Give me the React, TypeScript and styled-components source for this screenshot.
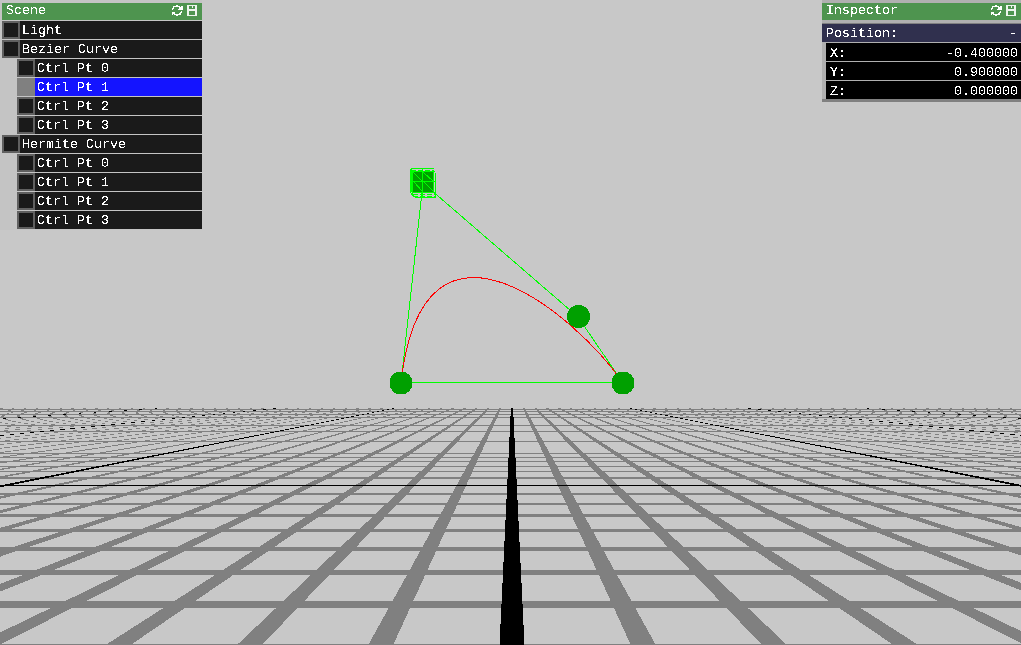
import React from "react";
import styled, { createGlobalStyle } from "styled-components";

const Global = createGlobalStyle`
  html, body { margin: 0; padding: 0; width: 1021px; height: 645px; overflow: hidden; background: #c8c8c8; }
`;

const Viewport = styled.div`
  position: relative;
  width: 1021px;
  height: 645px;
  overflow: hidden;
  background: #c8c8c8;
  font-family: "Liberation Mono", monospace;
  font-size: 13.33px;
  line-height: 17px;
  color: #fff;
`;
const SceneSvg = styled.svg`
  position: absolute;
  inset: 0;
`;
const Panel = styled.section<{ $side: "left" | "right" }>`
  position: absolute;
  top: 0;
  box-sizing: border-box;
  padding-top: 3px;
  ${(p) =>
    p.$side === "left"
      ? "left: 0; width: 202px; padding-left: 2px; background: #c4c4c4;"
      : "right: 0; width: 199px; background: #b0b0b0; border-bottom: 3px solid #808080;"}
`;
const TitleBar = styled.header`
  display: flex;
  align-items: center;
  box-sizing: border-box;
  height: 17px;
  padding: 0 5px 2px 4px;
  margin-bottom: 1px;
  background: #4e944f;
`;
const Label = styled.span`
  flex: 1;
  white-space: pre;
  filter: url(#pixelate);
`;
const TitleIcons = styled.span`
  display: flex;
  align-items: center;
  gap: 4px;
`;
const Row = styled.div<{ $level?: number; $selected?: boolean }>`
  display: flex;
  align-items: center;
  height: 18px;
  margin: 0 0 1px ${(p) => (p.$level ? 15 : 0)}px;
  background: ${(p) => (p.$selected ? "#1414ff" : "#1a1a1a")};
`;
const Check = styled.span<{ $on?: boolean }>`
  box-sizing: border-box;
  flex: none;
  width: 18px;
  height: 18px;
  margin-right: 2px;
  border: 2px solid ${(p) => (p.$on ? "#808080" : "#606060")};
  background: ${(p) => (p.$on ? "#808080" : "#1a1a1a")};
`;
const GroupHeader = styled.div`
  display: flex;
  align-items: center;
  box-sizing: border-box;
  height: 19px;
  margin: 3px 0 1px;
  padding: 0 4px;
  border-top: 1px solid #808080;
  background: #30304e;
`;
const Field = styled.div`
  display: flex;
  align-items: center;
  box-sizing: border-box;
  height: 18px;
  margin: 0 0 1px 4px;
  padding: 2px 3px 0 4px;
  background: #000;
  &:last-child {
    margin-bottom: 0;
  }
`;
const Value = styled.span`
  white-space: pre;
  filter: url(#pixelate);
`;

const HZ = 385, CX = 512, F = 1294, H = 1.98, W = 0.095;
const project = (X: number, Z: number) => {
  const d = F / Z;
  return `${(CX + (X * d) / H).toFixed(2)},${(HZ + d).toFixed(2)}`;
};
const Z0 = 12.9, ZFAR = 56.5, ZNEAR = 3;
const range = (a: number, b: number) => Array.from({ length: b - a + 1 }, (_, i) => a + i);
const columnPts = (X: number) =>
  [project(X - W, ZFAR), project(X + W, ZFAR), project(X + W, ZNEAR), project(X - W, ZNEAR)].join(" ");
const rowPts = (k: number) => {
  const z = Z0 + k;
  const yA = HZ + F / (z + W);
  const yB = HZ + F / Math.max(z - W, 0.1);
  return `0,${yA.toFixed(2)} 1021,${yA.toFixed(2)} 1021,${yB.toFixed(2)} 0,${yB.toFixed(2)}`;
};

const Floor = () => (
  <g shapeRendering="crispEdges">
    {range(-8, 43).map((k) => (
      <polygon key={`r${k}`} points={rowPts(k)} fill="#808080" />
    ))}
    {range(-50, 50).filter((x) => !(x % 10 === 0 && Math.abs(x) <= 30)).map((x) => (
      <polygon key={`c${x}`} points={columnPts(x)} fill="#808080" />
    ))}
    <polygon points={rowPts(0)} fill="#000" />
    {[-30, -20, -10, 0, 10, 20, 30].map((x) => (
      <polygon key={`a${x}`} points={columnPts(x)} fill="#000" />
    ))}
  </g>
);

const Curve = () => (
  <g shapeRendering="crispEdges">
    <path d="M401 383 L423 183 L578 317 L623 383" fill="none" stroke="#00ff00" strokeWidth="1" />
    <rect x="401" y="382" width="222" height="1.2" fill="#00ff00" />
    <path d="M401 383 C423 183 578 317 623 383" fill="none" stroke="#ff0000" strokeWidth="1" />
    <circle cx="401" cy="383" r="11.5" fill="#00a000" />
    <circle cx="623" cy="383" r="11.5" fill="#00a000" />
    <circle cx="578.5" cy="316.5" r="11.5" fill="#00a000" />
  </g>
);

const Gizmo = () => (
  <g shapeRendering="crispEdges">
    <rect x="413" y="172" width="21" height="20" fill="#00a000" />
    <g fill="none" stroke="#00ff00" strokeWidth="1">
      <path d="M410.5 168.5 H433.5 M410.5 171.5 H434.5 M410.5 168.5 V192.5 M412.5 170.5 V194.5" />
      <path d="M433.5 169.5 V192.5 M435.5 172.5 V197.5 M414.5 197.5 H435.5 M412.5 192.5 H434.5" />
      <path d="M410.5 192.5 L414.5 197.5" />
      <path d="M422.5 168.5 V197.5 M412.5 181.5 H434.5 M413.5 172.5 L422.5 181.5 M423.5 172.5 L433.5 181.5 M423.5 181.5 L433.5 191.5 M413.5 181.5 L422.5 191.5" />
    </g>
    <path d="M411 170 H433 M413 194.5 H435 M413 196 H435" stroke="#00ff00" strokeDasharray="5 2" />
    <path d="M411.5 169 V192" stroke="#00ff00" />
  </g>
);

const Refresh = () => (
  <svg width="12" height="11" viewBox="0 0 12 11" fill="none" stroke="#fff" strokeWidth="1.4" shapeRendering="crispEdges">
    <path d="M1.5 5 C2 2 4 1 6 1 C7.5 1 8.5 1.5 9.5 3" />
    <path d="M10.5 6 C10 9 8 10 6 10 C4.5 10 3.5 9.5 2.5 8" />
    <path d="M7 4.5 H11.5 V0.5 Z M0.5 6.5 H5 L0.5 10.5 Z" fill="#fff" stroke="none" />
  </svg>
);
const Save = () => (
  <svg width="10" height="11" viewBox="0 0 10 11" shapeRendering="crispEdges">
    <rect x="0" y="0" width="10" height="11" fill="#eef4ee" />
    <rect x="2" y="1" width="6" height="3" fill="#4e944f" />
    <rect x="5" y="1" width="1" height="2" fill="#eef4ee" />
    <rect x="2" y="6" width="6" height="4" fill="#4e944f" />
  </svg>
);

const Title = ({ text }: { text: string }) => (
  <TitleBar>
    <Label>{text}</Label>
    <TitleIcons><Refresh /><Save /></TitleIcons>
  </TitleBar>
);

const tree = [
  { name: "Light", level: 0 },
  { name: "Bezier Curve", level: 0 },
  { name: "Ctrl Pt 0", level: 1 },
  { name: "Ctrl Pt 1", level: 1, selected: true },
  { name: "Ctrl Pt 2", level: 1 },
  { name: "Ctrl Pt 3", level: 1 },
  { name: "Hermite Curve", level: 0 },
  { name: "Ctrl Pt 0", level: 1 },
  { name: "Ctrl Pt 1", level: 1 },
  { name: "Ctrl Pt 2", level: 1 },
  { name: "Ctrl Pt 3", level: 1 },
];
const fields = [["X:", "-0.400000"], ["Y:", "0.900000"], ["Z:", "0.000000"]];

export default function App() {
  return (
    <Viewport>
      <Global />
      <SceneSvg width="1021" height="645" viewBox="0 0 1021 645">
        <defs>
          <filter id="pixelate" x="0" y="0" width="100%" height="100%" colorInterpolationFilters="sRGB">
            <feComponentTransfer>
              <feFuncA type="discrete" tableValues="0 0 0 1 1 1" />
            </feComponentTransfer>
          </filter>
        </defs>
        <Floor />
        <Curve />
        <Gizmo />
      </SceneSvg>
      <Panel $side="left">
        <Title text="Scene" />
        {tree.map((r, i) => (
          <Row key={i} $level={r.level} $selected={r.selected}>
            <Check $on={r.selected} />
            <Label>{r.name}</Label>
          </Row>
        ))}
      </Panel>
      <Panel $side="right">
        <Title text="Inspector" />
        <GroupHeader>
          <Label>Position:</Label>
          <Value>-</Value>
        </GroupHeader>
        {fields.map(([k, v]) => (
          <Field key={k}>
            <Label>{k}</Label>
            <Value>{v}</Value>
          </Field>
        ))}
      </Panel>
    </Viewport>
  );
}
